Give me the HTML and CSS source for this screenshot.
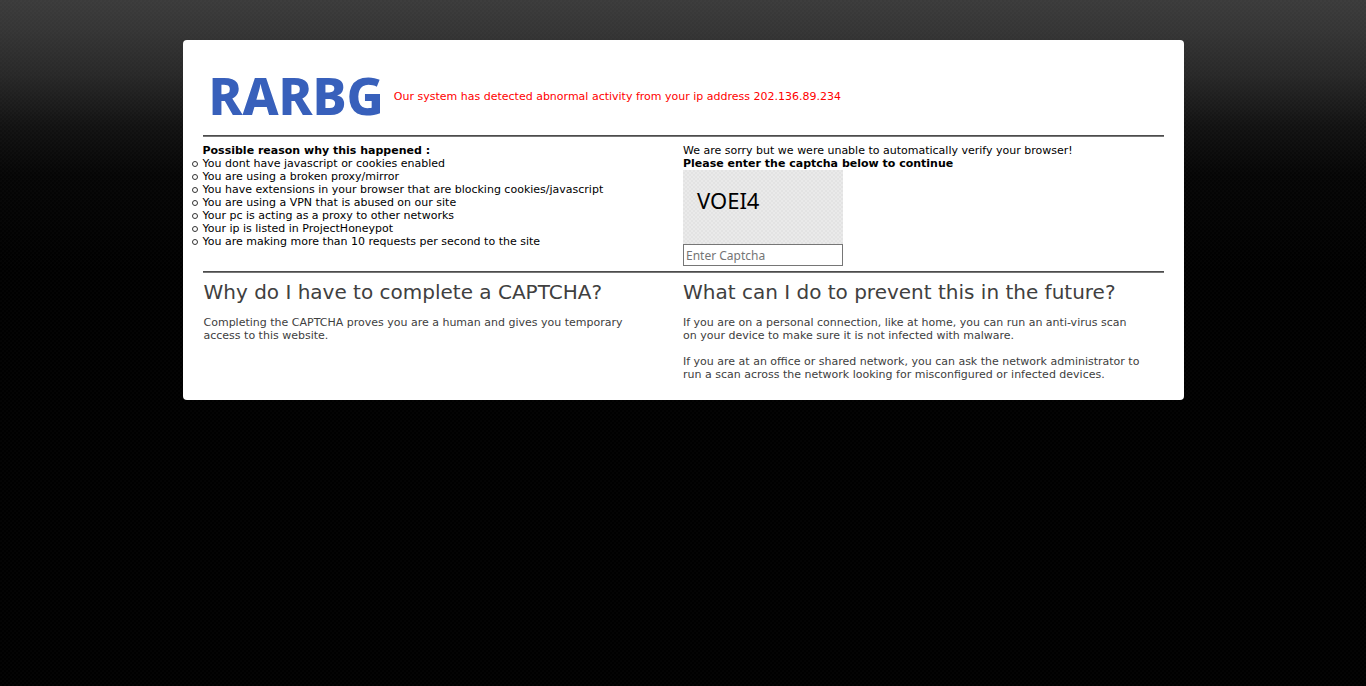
FILE: index.html
```
<!DOCTYPE html>
<html lang="en">
<head>
<meta charset="utf-8">
<title>Please verify your browser</title>
<link rel="stylesheet" href="styles.css">
</head>
<body>
<main class="panel">
  <header class="masthead">
    <div class="logo">RARBG</div>
    <p class="warning">Our system has detected abnormal activity from your ip address 202.136.89.234</p>
  </header>
  <hr class="rule">
  <section class="columns verify">
    <div>
      <b>Possible reason why this happened :</b>
      <ul class="reasons">
        <li>You dont have javascript or cookies enabled</li>
        <li>You are using a broken proxy/mirror</li>
        <li>You have extensions in your browser that are blocking cookies/javascript</li>
        <li>You are using a VPN that is abused on our site</li>
        <li>Your pc is acting as a proxy to other networks</li>
        <li>Your ip is listed in ProjectHoneypot</li>
        <li>You are making more than 10 requests per second to the site</li>
      </ul>
    </div>
    <form class="captcha">
      <span>We are sorry but we were unable to automatically verify your browser!</span>
      <label for="captcha"><b>Please enter the captcha below to continue</b></label>
      <div class="code">VOEI4</div>
      <input class="entry" id="captcha" type="text" placeholder="Enter Captcha">
    </form>
  </section>
  <hr class="rule">
  <section class="columns help">
    <article class="why">
      <h2>Why do I have to complete a CAPTCHA?</h2>
      <p>Completing the CAPTCHA proves you are a human and gives you temporary access to this website.</p>
    </article>
    <article class="prevent">
      <h2>What can I do to prevent this in the future?</h2>
      <p>If you are on a personal connection, like at home, you can run an anti-virus scan on your device to make sure it is not infected with malware.</p>
      <p>If you are at an office or shared network, you can ask the network administrator to run a scan across the network looking for misconfigured or infected devices.</p>
    </article>
  </section>
</main>
</body>
</html>
```
FILE: styles.css
```
*, *::before { box-sizing: border-box; }

html { background: #000; }

body {
  margin: 0;
  padding: 40px 20px;
  min-height: 100vh;
  background:
    radial-gradient(circle at 1px 1px, rgba(255, 255, 255, 0.05) 0, transparent 1px) 0 0 / 4px 4px,
    radial-gradient(circle at 1px 1px, rgba(255, 255, 255, 0.05) 0, transparent 1px) 2px 2px / 4px 4px,
    linear-gradient(#3b3b3b 0, #353535 30px, #282828 75px, #121212 125px, #050505 175px, #000 270px);
  color: #000;
  font: 11px/13px Verdana, "DejaVu Sans", sans-serif;
}

.panel {
  max-width: 1001px;
  margin: 0 auto;
  padding: 20px 20px 19px;
  background: #fff;
  border-radius: 4px;
}

.masthead {
  display: flex;
  align-items: center;
  gap: 10px;
  height: 73px;
  margin-bottom: 2px;
  padding-left: 6px;
}

.logo {
  padding-bottom: 4px;
  color: #3860bb;
  font: 800 51px/68px "Noto Sans", sans-serif;
}

.warning { margin: 0; color: #f00; }

.rule {
  height: 2px;
  margin: 0;
  border: 0;
  border-top: 1px solid #4c4c4c;
  background: #777;
}

.columns {
  display: grid;
  grid-template-columns: 1fr 1fr;
}

.verify { padding: 7px 0 5px; }

.reasons { margin: 0; padding: 0; list-style: none; }

.reasons li { display: flex; align-items: center; }

.reasons li::before {
  content: "";
  width: 6px;
  height: 6px;
  margin: 0 5px 0 -11px;
  border: 1px solid #333;
  border-radius: 50%;
}

.captcha {
  display: flex;
  flex-direction: column;
  align-items: flex-start;
}

.code {
  width: 160px;
  height: 74px;
  padding: 16px 14px;
  background: repeating-conic-gradient(#e3e3e3 0 25%, #eaeaea 0 50%) 0 0 / 4px 4px;
  font: 22px/28px "Noto Sans", sans-serif;
}

.entry {
  width: 160px;
  height: 22px;
  padding: 1px 2px;
  border: 1px solid #767676;
  font: 12px/18px "Noto Sans", sans-serif;
}

.entry::placeholder { color: #757575; }

.help { color: #404040; padding-top: 7px; }

.why { padding: 0 20px 0 1px; }

.prevent { padding-right: 22px; }

.help h2 { margin: 0 0 11px; font-size: 20px; line-height: 25px; font-weight: normal; }

.help p { margin: 0 0 13px; }

.help p:last-child { margin: 0; }
```
